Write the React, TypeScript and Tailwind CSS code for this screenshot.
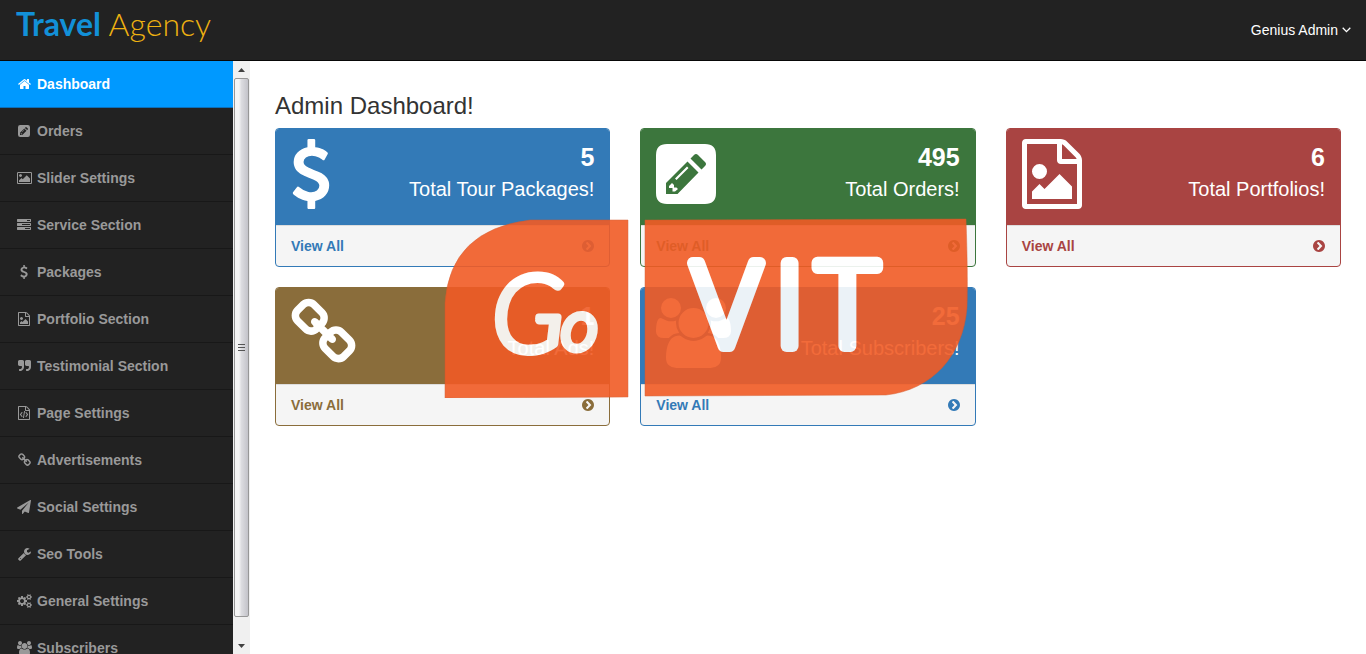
import { clsx } from "clsx";

type IconName =
  | "home"
  | "pencil"
  | "picture"
  | "tasks"
  | "dollar"
  | "fileImage"
  | "quote"
  | "fileCode"
  | "link"
  | "plane"
  | "wrench"
  | "cogs"
  | "users"
  | "chevron";

const icons: Record<IconName, { box: string; d: string }> = {
  home: {
    box: "64 0 1664 1792",
    d: "M1472 992v480q0 26-19 45t-45 19h-384v-384h-256v384h-384q-26 0-45-19t-19-45v-480q0-1 .5-3t.5-3l575-474 575 474q1 2 1 6zm223-69l-62 74q-8 9-21 11h-3q-13 0-21-7l-692-577-692 577q-12 8-24 7-13-2-21-11l-62-74q-8-10-7-23.5t11-21.5l719-599q32-26 76-26t76 26l244 204v-195q0-14 9-23t23-9h192q14 0 23 9t9 23v408l219 182q10 8 11 21.5t-7 23.5z",
  },
  pencil: {
    box: "0 -5 60 70",
    d: "M11 0H49Q60 0 60 11V49Q60 60 49 60H11Q0 60 0 49V11Q0 0 11 0ZM10 39V50H21.500L42.500 28.500L31.500 17.500ZM34.500 14.500L45.500 25.500L49 22Q51 20 49 18L42 11Q40 9 38 11ZM19 34.500L31 22.500L32.500 24L20.500 36ZM13 42L16 39L18 41V43.500H20.500L22 45L19 47.500L16.500 47.500V44H13Z",
  },
  picture: {
    box: "-64 0 1920 1792",
    d: "M576 576q0 80-56 136t-136 56-136-56-56-136 56-136 136-56 136 56 56 136zm1024 384v448h-1408v-192l320-320 160 160 512-512zm96-704h-1600q-13 0-22.500 9.500t-9.500 22.500v1216q0 13 9.500 22.500t22.500 9.500h1600q13 0 22.500-9.500t9.500-22.500v-1216q0-13-9.500-22.500t-22.500-9.500zm160 32v1216q0 66-47 113t-113 47h-1600q-66 0-113-47t-47-113v-1216q0-66 47-113t113-47h1600q66 0 113 47t47 113z",
  },
  tasks: {
    box: "0 0 1792 1792",
    d: "M1024 1408h640v-128h-640v128zm-384-512h1024v-128h-1024v128zm640-512h384v-128h-384v128zm512 832v256q0 26-19 45t-45 19h-1664q-26 0-45-19t-19-45v-256q0-26 19-45t45-19h1664q26 0 45 19t19 45zm0-512v256q0 26-19 45t-45 19h-1664q-26 0-45-19t-19-45v-256q0-26 19-45t45-19h1664q26 0 45 19t19 45zm0-512v256q0 26-19 45t-45 19h-1664q-26 0-45-19t-19-45v-256q0-26 19-45t45-19h1664q26 0 45 19t19 45z",
  },
  dollar: {
    box: "384 0 1024 1792",
    d: "M1362 1185q0 153-99.500 263.500t-258.500 136.500v175q0 14-9 23t-23 9h-135q-13 0-22.500-9.500t-9.500-22.500v-175q-66-9-127.500-31t-101.500-44.500-74-48-46.500-37.500-17.500-18q-17-21-2-41l103-135q7-10 23-12 15-2 24 9l2 2q113 99 243 125 37 8 74 8 81 0 142.500-43t61.500-122q0-28-15-53t-33.500-42-58.500-37.500-66-32-80-32.500q-39-16-61.500-25t-61.500-26.500-62.500-31-56.500-35.500-53.500-42.500-43.500-49-35.500-58-21-66.500-8.500-78q0-138 98-242t255-134v-180q0-13 9.500-22.500t22.500-9.500h135q14 0 23 9t9 23v176q57 6 110.500 23t87 33.500 63.500 37.500 39 29 15 14q17 18 5 38l-81 146q-8 15-23 16-14 3-27-7-3-3-14.500-12t-39-26.500-58.500-32-74.500-26-85.500-11.500q-95 0-155 43t-60 111q0 26 8.500 48t29.500 41.500 39.500 33 56 31 60.500 27 70 27.500q53 20 81 31.500t76 35 75.500 42.500 62 50 53 63.500 31.500 76.500 13 94z",
  },
  fileImage: {
    box: "128 0 1536 1792",
    d: "M1596 380q28 28 48 76t20 88v1152q0 40-28 68t-68 28h-1344q-40 0-68-28t-28-68v-1600q0-40 28-68t68-28h896q40 0 88 20t76 48zm-444-244v376h376q-10-29-22-41l-313-313q-12-12-41-22zm384 1528v-1024h-416q-40 0-68-28t-28-68v-416h-768v1536h1280zm-128-448v320h-1024v-192l192-192 128 128 384-384zm-832-192q-80 0-136-56t-56-136 56-136 136-56 136 56 56 136-56 136-136 56z",
  },
  quote: {
    box: "64 0 1664 1792",
    d: "M832 320v704q0 104-40.500 198.500t-109.500 163.500-163.500 109.500-198.500 40.500h-64q-26 0-45-19t-19-45v-128q0-26 19-45t45-19h64q106 0 181-75t75-181v-32q0-40-28-68t-68-28h-224q-80 0-136-56t-56-136v-384q0-80 56-136t136-56h384q80 0 136 56t56 136zm896 0v704q0 104-40.500 198.500t-109.500 163.500-163.500 109.500-198.500 40.500h-64q-26 0-45-19t-19-45v-128q0-26 19-45t45-19h64q106 0 181-75t75-181v-32q0-40-28-68t-68-28h-224q-80 0-136-56t-56-136v-384q0-80 56-136t136-56h384q80 0 136 56t56 136z",
  },
  fileCode: {
    box: "128 0 1536 1792",
    d: "M1596 380q28 28 48 76t20 88v1152q0 40-28 68t-68 28h-1344q-40 0-68-28t-28-68v-1600q0-40 28-68t68-28h896q40 0 88 20t76 48zm-444-244v376h376q-10-29-22-41l-313-313q-12-12-41-22zm384 1528v-1024h-416q-40 0-68-28t-28-68v-416h-768v1536h1280zM608 768q8-11 21-12.500t24 6.500l51 38q11 8 12.500 21t-6.500 24l-182 243 182 243q8 11 6.500 24t-12.500 21l-51 38q-11 8-24 6.500t-21-12.500l-226-301q-14-19 0-38zm802 301q14 19 0 38l-226 301q-8 11-21 12.500t-24-6.500l-51-38q-11-8-12.500-21t6.500-24l182-243-182-243q-8-11-6.500-24t12.500-21l51-38q11-8 24-6.500t21 12.500zm-620 461q-13-2-20.500-13t-5.500-24l138-831q2-13 13-20.500t24-5.500l63 10q13 2 20.500 13t5.500 24l-138 831q-2 13-13 20.500t-24 5.500z",
  },
  link: {
    box: "64 0 1664 1792",
    d: "M1520 1216q0-40-28-68l-208-208q-28-28-68-28-42 0-72 32 3 3 19 18.500t21.500 21.500 15 19 13 25.500 3.500 27.500q0 40-28 68t-68 28q-15 0-27.500-3.500t-25.500-13-19-15-21.500-21.500-18.500-19q-33 31-33 73 0 40 28 68l206 207q27 27 68 27 40 0 68-26l147-146q28-28 28-67zm-703-705q0-40-28-68l-206-207q-28-28-68-28-39 0-68 27l-147 146q-28 28-28 67 0 40 28 68l208 208q27 27 68 27 42 0 72-31-3-3-19-18.500t-21.500-21.500-15-19-13-25.500-3.500-27.500q0-40 28-68t68-28q15 0 27.500 3.500t25.500 13 19 15 21.500 21.500 18.500 19q33-31 33-73zm895 705q0 120-85 203l-147 146q-83 83-203 83-121 0-204-85l-206-207q-83-83-83-203 0-123 88-209l-88-88q-86 88-208 88-120 0-204-84l-208-208q-84-84-84-204t85-203l147-146q83-83 203-83 121 0 204 85l206 207q83 83 83 203 0 123-88 209l88 88q86-88 208-88 120 0 204 84l208 208q84 84 84 204z",
  },
  plane: {
    box: "0 0 1792 1792",
    d: "M1764 11q33 24 27 64l-256 1536q-5 29-32 45-14 8-31 8-11 0-24-5l-453-185-242 295q-18 23-49 23-13 0-22-4-19-7-30.500-23.500t-11.500-36.500v-349l864-1059-1069 925-395-162q-37-14-40-55-2-40 32-59l1664-960q15-9 32-9 20 0 36 11z",
  },
  wrench: {
    box: "64 0 1664 1792",
    d: "M448 1472q0-26-19-45t-45-19-45 19-19 45 19 45 45 19 45-19 19-45zm644-420l-682 682q-37 37-90 37-52 0-91-37l-106-108q-38-36-38-90 0-53 38-91l681-681q39 98 114.500 173.500t173.500 114.500zm634-435q0 39-23 106-47 134-164.500 217.500t-258.500 83.500q-185 0-316.500-131.500t-131.500-316.500 131.500-316.500 316.500-131.500q58 0 121.500 16.500t107.500 46.500q16 11 16 28t-16 28l-293 169v224l193 107q5-3 79-48.500t135.500-81 70.500-35.500q15 0 23.500 10t8.500 25z",
  },
  cogs: {
    box: "-64 0 1920 1792",
    d: "M832 896q0-106-75-181t-181-75-181 75-75 181 75 181 181 75 181-75 75-181zm768 512q0-52-38-90t-90-38-90 38-38 90q0 53 37.500 90.500t90.500 37.500 90.500-37.500 37.500-90.500zm0-1024q0-52-38-90t-90-38-90 38-38 90q0 53 37.500 90.500t90.500 37.500 90.500-37.500 37.500-90.500zm-384 421v185q0 10-7 19.500t-16 10.500l-155 24q-11 35-32 76 34 48 90 115 7 11 7 20 0 12-7 19-23 30-82.500 89.500t-78.500 59.500q-11 0-21-7l-115-90q-37 19-77 31-11 108-23 155-7 24-30 24h-186q-11 0-20-7.500t-10-17.500l-23-153q-34-10-75-31l-118 89q-7 7-20 7-11 0-21-8-144-133-144-160 0-9 7-19 10-14 41-53t47-61q-23-44-35-82l-152-24q-10-1-17-9.500t-7-19.500v-185q0-10 7-19.500t16-10.500l155-24q11-35 32-76-34-48-90-115-7-11-7-20 0-12 7-20 22-30 82-89t79-59q11 0 21 7l115 90q34-18 77-32 11-108 23-154 7-24 30-24h186q11 0 20 7.500t10 17.500l23 153q34 10 75 31l118-89q8-7 20-7 11 0 21 8 144 133 144 160 0 8-7 19-12 16-42 54t-45 60q23 48 34 82l152 23q10 2 17 10.500t7 19.500zm640 533v140q0 16-149 31-12 27-30 52 51 113 51 138 0 4-4 7-122 71-124 71-8 0-46-47t-52-68q-20 2-30 2t-30-2q-14 21-52 68t-46 47q-2 0-124-71-4-3-4-7 0-25 51-138-18-25-30-52-149-15-149-31v-140q0-16 149-31 13-29 30-52-51-113-51-138 0-4 4-7 4-2 35-20t59-34 30-16q8 0 46 46.500t52 67.500q20-2 30-2t30 2q51-71 92-112l6-2q4 0 124 70 4 3 4 7 0 25-51 138 17 23 30 52 149 15 149 31zm0-1024v140q0 16-149 31-12 27-30 52 51 113 51 138 0 4-4 7-122 71-124 71-8 0-46-47t-52-68q-20 2-30 2t-30-2q-14 21-52 68t-46 47q-2 0-124-71-4-3-4-7 0-25 51-138-18-25-30-52-149-15-149-31v-140q0-16 149-31 13-29 30-52-51-113-51-138 0-4 4-7 4-2 35-20t59-34 30-16q8 0 46 46.500t52 67.500q20-2 30-2t30 2q51-71 92-112l6-2q4 0 124 70 4 3 4 7 0 25-51 138 17 23 30 52 149 15 149 31z",
  },
  users: {
    box: "0 0 1920 1792",
    d: "M593 896q-162 5-265 128h-134q-82 0-138-40.500t-56-118.500q0-353 124-353 6 0 43.500 21t97.500 42.500 119 21.500q67 0 133-23-5 37-5 66 0 139 81 256zm1071 637q0 120-73 189.500t-194 69.500h-874q-121 0-194-69.500t-73-189.500q0-53 3.500-103.500t14-109 26.500-108.500 43-97.500 62-81 85.500-53.500 111.500-20q10 0 43 21.500t73 48 107 48 135 21.500 135-21.500 107-48 73-48 43-21.500q61 0 111.500 20t85.500 53.500 62 81 43 97.500 26.500 108.500 14 109 3.500 103.500zm-1024-1277q0 106-75 181t-181 75-181-75-75-181 75-181 181-75 181 75 75 181zm704 384q0 159-112.500 271.500t-271.500 112.500-271.500-112.500-112.500-271.500 112.500-271.500 271.500-112.500 271.500 112.500 112.500 271.500zm576 225q0 78-56 118.500t-138 40.500h-134q-103-123-265-128 81-117 81-256 0-29-5-66 66 23 133 23 59 0 119-21.500t97.500-42.500 43.500-21q124 0 124 353zm-128-609q0 106-75 181t-181 75-181-75-75-181 75-181 181-75 181 75 75 181z",
  },
  chevron: {
    box: "128 0 1536 1792",
    d: "M845 1395l454-454q19-19 19-45t-19-45l-454-454q-19-19-45-19t-45 19l-102 102q-19 19-19 45t19 45l307 307-307 307q-19 19-19 45t19 45l102 102q19 19 45 19t45-19zm819-499q0 209-103 385.500t-279.500 279.500-385.500 103-385.500-103-279.500-279.500-103-385.500 103-385.500 279.500-279.500 385.500-103 385.500 103 279.500 279.500 103 385.500z",
  },
};

const Icon = ({ name, className }: { name: IconName; className: string }) => (
  <svg
    viewBox={icons[name].box}
    className={clsx("w-auto shrink-0", className)}
    fill="currentColor"
    fillRule={name === "pencil" ? "evenodd" : "nonzero"}
    aria-hidden="true"
  >
    <path d={icons[name].d} />
  </svg>
);

const menu: { label: string; icon: IconName }[] = [
  { label: "Dashboard", icon: "home" },
  { label: "Orders", icon: "pencil" },
  { label: "Slider Settings", icon: "picture" },
  { label: "Service Section", icon: "tasks" },
  { label: "Packages", icon: "dollar" },
  { label: "Portfolio Section", icon: "fileImage" },
  { label: "Testimonial Section", icon: "quote" },
  { label: "Page Settings", icon: "fileCode" },
  { label: "Advertisements", icon: "link" },
  { label: "Social Settings", icon: "plane" },
  { label: "Seo Tools", icon: "wrench" },
  { label: "General Settings", icon: "cogs" },
  { label: "Subscribers", icon: "users" },
];

const tones = {
  blue: { border: "border-[#337ab7]", bg: "bg-[#337ab7]", text: "text-[#337ab7]" },
  green: { border: "border-[#3c763d]", bg: "bg-[#3c763d]", text: "text-[#3c763d]" },
  red: { border: "border-[#a94442]", bg: "bg-[#a94442]", text: "text-[#a94442]" },
  brown: { border: "border-[#8a6d3b]", bg: "bg-[#8a6d3b]", text: "text-[#8a6d3b]" },
};

type Stat = {
  count: number;
  label: string;
  icon: IconName;
  tone: keyof typeof tones;
};

const stats: Stat[] = [
  { count: 5, label: "Total Tour Packages!", icon: "dollar", tone: "blue" },
  { count: 495, label: "Total Orders!", icon: "pencil", tone: "green" },
  { count: 6, label: "Total Portfolios!", icon: "fileImage", tone: "red" },
  { count: 1, label: "Total Ads!", icon: "link", tone: "brown" },
  { count: 25, label: "Total Subscribers!", icon: "users", tone: "blue" },
];

const Header = () => (
  <header className="flex h-[61px] shrink-0 items-center justify-between border-b border-[#080808] bg-[#222] pr-[15px] pl-4">
    <a
      href="#"
      className="pb-3 font-['Lato',sans-serif] text-[32px] leading-10 font-light text-[#eeb111]"
    >
      <span className="font-bold text-[#1290d8]">Travel</span> Agency
    </a>
    <button type="button" className="flex items-center gap-1 text-sm text-white">
      Genius Admin
      <svg viewBox="0 0 9 6" className="w-[9px]" fill="none" stroke="currentColor" strokeWidth="1.3" aria-hidden="true">
        <path d="M0.700 0.800L4.500 4.600L8.300 0.800" />
      </svg>
    </button>
  </header>
);

const Sidebar = () => (
  <nav className="w-[233px] overflow-y-auto bg-[#222] [scrollbar-width:none]">
    <ul>
      {menu.map((item, i) => (
        <li key={item.label}>
          <a
            href="#"
            className={clsx(
              "flex h-[47px] items-center gap-1 border-b pl-[15px] text-sm font-bold",
              i === 0
                ? "border-[#0b6fba] bg-[#0099ff] text-white"
                : "border-[#181818] text-[#999]"
            )}
          >
            <span className="flex w-[18px] justify-center">
              <Icon name={item.icon} className="h-[14px]" />
            </span>
            {item.label}
          </a>
        </li>
      ))}
    </ul>
  </nav>
);

const Arrow = ({ down }: { down?: boolean }) => (
  <svg viewBox="0 0 17 17" className="w-[17px] shrink-0" fill="#404040" aria-hidden="true">
    <path d={down ? "M5 7H12L8.500 11Z" : "M5 11H12L8.500 7Z"} />
  </svg>
);

const ScrollRail = () => (
  <div className="flex w-[17px] shrink-0 flex-col bg-[#f0f0f0]">
    <Arrow />
    {/* thumb */}
    <div className="mx-px flex grow flex-col items-center justify-center gap-[2px] rounded-xs border border-[#979797] bg-linear-to-r from-[#f5f5f5] from-30% via-[#dcdce0] via-50% to-[#c3c3c9]">
      <span className="h-px w-[7px] bg-[#555]" />
      <span className="h-px w-[7px] bg-[#555]" />
      <span className="h-px w-[7px] bg-[#555]" />
    </div>
    <div className="h-5 shrink-0" />
    <Arrow down />
  </div>
);

const StatCard = ({ stat }: { stat: Stat }) => {
  const tone = tones[stat.tone];
  return (
    <section className={clsx("overflow-hidden rounded border bg-[#f5f5f5]", tone.border)}>
      <div className={clsx("flex justify-between px-[15px] pt-[10px] pb-4 text-white", tone.bg)}>
        <Icon name={stat.icon} className="h-[70px]" />
        <div className="text-right">
          <p className="text-[25px] leading-9 font-bold">{stat.count}</p>
          <p className="text-xl">{stat.label}</p>
        </div>
      </div>
      <a
        href="#"
        className={clsx(
          "flex items-center justify-between border-t border-[#ddd] px-[15px] py-[10px] text-sm font-bold",
          tone.text
        )}
      >
        View All
        <Icon name="chevron" className="h-[14px]" />
      </a>
    </section>
  );
};

// translucent brand stamp that floats over the cards
const Watermark = () => (
  <svg
    viewBox="0 0 524 180"
    className="pointer-events-none absolute top-[157px] left-[194px] w-[524px] opacity-90"
    role="img"
    aria-label="Go VIT"
  >
    <g fill="#f15b25" stroke="#d65a2c" strokeOpacity="0.5">
      <path d="M86 2L184 2V179L1 180V85Q6 12 86 2Z" />
      <path d="M201 2L522 1Q524 60 523 90C519 138 488 172 442 177L201 178Z" />
    </g>
    <g fill="#fff" stroke="#fff" strokeLinejoin="round" fontWeight="300">
      <g fontStyle="italic" fontFamily="Lato, sans-serif" strokeWidth="7">
        <text x="48" y="134" fontSize="106">
          G
        </text>
        <text x="117" y="132" fontSize="72">
          o
        </text>
      </g>
      <g fontFamily="'Open Sans', sans-serif" fontSize="116" strokeWidth="12">
        <text x="249" y="128">
          V
        </text>
        <text x="331" y="128">
          I
        </text>
        <text x="373" y="128">
          T
        </text>
      </g>
    </g>
  </svg>
);

const App = () => {
  return (
    <div className="flex h-screen flex-col bg-white font-['Liberation_Sans',Arial,sans-serif] text-[#333]">
      <Header />
      <div className="flex min-h-0 grow">
        <div className="flex shrink-0">
          <Sidebar />
          <ScrollRail />
        </div>
        <main className="relative grow overflow-hidden px-[25px] pt-8">
          <h1 className="mb-[9px] text-2xl leading-[26px]">Admin Dashboard!</h1>
          <div className="grid grid-cols-3 gap-x-[30px] gap-y-5">
            {stats.map((stat) => (
              <StatCard key={stat.label} stat={stat} />
            ))}
          </div>
          <Watermark />
        </main>
      </div>
    </div>
  );
};

export default App;
